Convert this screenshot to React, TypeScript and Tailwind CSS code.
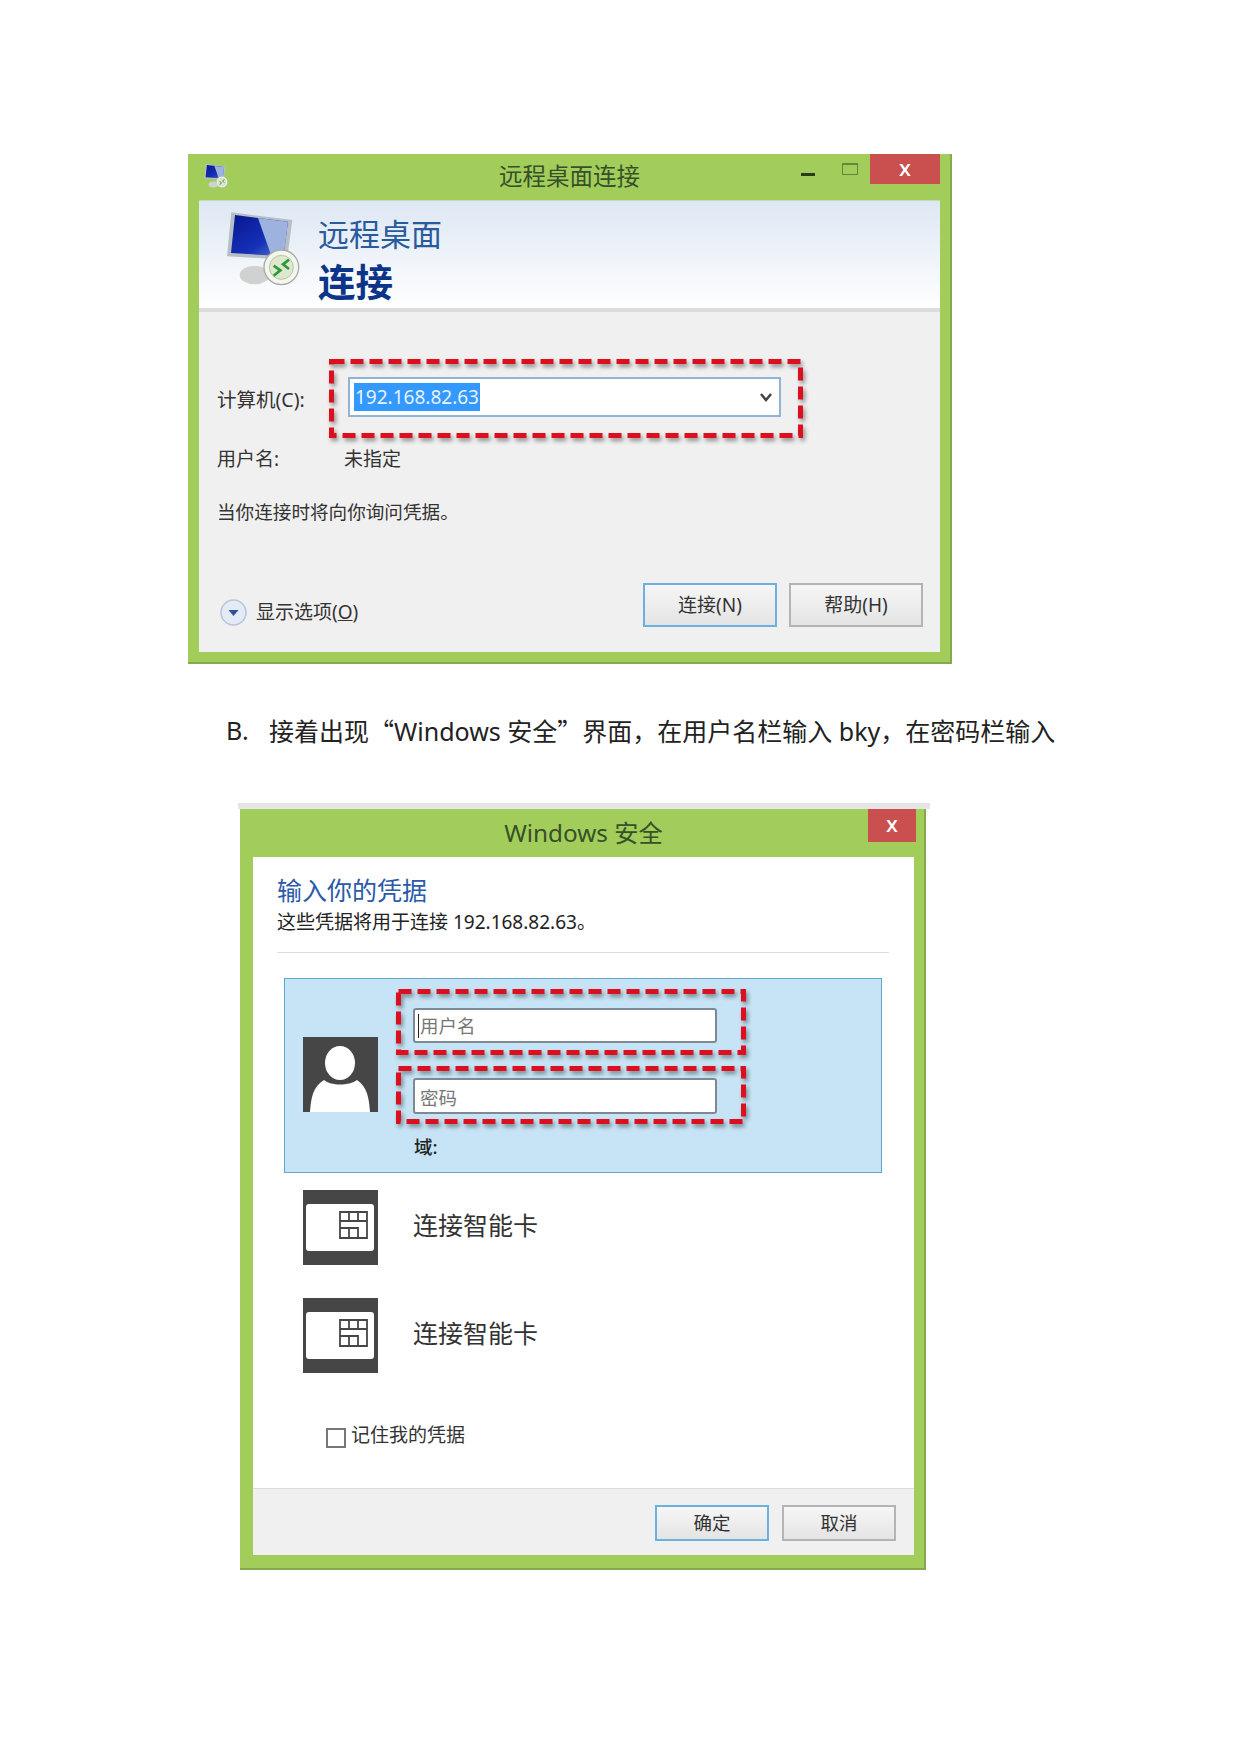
const MonitorIcon = ({ size }: { size: number }) => (
  <svg width={size} height={size} viewBox="100 180 240 240" className="shrink-0">
    <defs>
      <linearGradient id="screen" x1="0" y1="0" x2="1" y2="1">
        <stop offset="0" stopColor="#08168f" />
        <stop offset="0.6" stopColor="#1431b8" />
        <stop offset="1" stopColor="#5f7cc4" />
      </linearGradient>
    </defs>
    <ellipse cx="195" cy="378" rx="45" ry="28" fill="#d0d2d2" />
    <path d="M125 190L308 213L292 332L112 322Z" fill="#b8bec6" />
    <path d="M136 198L295 218L282 322L124 312Z" fill="url(#screen)" />
    <path d="M205 207L295 218L282 322L245 320Z" fill="#9db2de" />
    <circle cx="275" cy="355" r="52" fill="#f4f5ef" stroke="#a8aba4" strokeWidth="4" />
    <circle cx="275" cy="355" r="36" fill="#dfe8cf" stroke="#b5c89c" strokeWidth="3" />
    <path d="M252 350L272 364L252 380M298 332L280 346L298 360" fill="none" stroke="#2a9a3a" strokeWidth="8" />
  </svg>
);

const SmartCardIcon = () => (
  <svg width="75" height="75" viewBox="0 0 75 75" className="shrink-0">
    <rect width="75" height="75" fill="#464646" />
    <rect x="3" y="14" width="68" height="47" rx="3" fill="#ffffff" />
    <path d="M37 22H64V48H37ZM37 31H64M37 38H55V48M46 22V31M55 22V31M46 38V48" fill="none" stroke="#464646" strokeWidth="1.8" />
  </svg>
);

const PersonIcon = () => (
  <svg width="75" height="75" viewBox="0 0 75 75" className="shrink-0">
    <rect width="75" height="75" fill="#464646" />
    <ellipse cx="37" cy="26" rx="15" ry="17" fill="#ffffff" />
    <path d="M7 75C8 60 10 50 21 43C28 49 46 49 54 43C64 50 66 60 67 75Z" fill="#ffffff" />
  </svg>
);

// red annotation frame drawn over the dialog fields
const RedFrame = ({ w, h, className }: { w: number; h: number; className: string }) => (
  <svg width={w} height={h} className={`absolute drop-shadow-[2px_3px_2px_rgba(0,0,0,0.4)] ${className}`}>
    <rect x="2.5" y="2.5" width={w - 5} height={h - 5} fill="none" stroke="#dc0f1e" strokeWidth="5" strokeDasharray="13 6" />
  </svg>
);

const Btn = ({ label, primary, w, h, size }: { label: string; primary?: boolean; w: string; h: string; size: string }) => (
  <div className={`flex items-center justify-center bg-gradient-to-b from-[#f6f6f6] to-[#e4e4e4] text-[#333333] ${w} ${h} ${size} ${primary ? 'border-2 border-[#6cb0dc]' : 'border-2 border-[#b4b4b4]'}`}>
    {label}
  </div>
);

export default function App() {
  return (
    <div className="w-[1240px] h-[1753px] overflow-hidden bg-white pt-[154px] font-['Noto_Sans','Noto_Sans_CJK_SC',sans-serif] text-[#333333]">
      {/* remote desktop dialog */}
      <div className="ml-[188px] w-[764px] h-[510px] flex flex-col bg-[#a2cd5a] pl-[11px] pr-[12px] pb-[12px] shadow-[inset_-2px_-2px_0_#86a84e]">
        <div className="h-[46px] shrink-0 grid grid-cols-[1fr_auto_1fr]">
          <div className="pl-[4px] pt-[9px]">
            <MonitorIcon size={26} />
          </div>
          <div className="text-[23.5px] leading-[44px] text-[#36502a]">远程桌面连接</div>
          <div className="flex justify-end items-start">
            <div className="w-[14px] h-[3px] bg-[#2c3a20] mt-[19px]"></div>
            <div className="w-[16px] h-[12px] border border-[#5d8a3e] border-t-2 ml-[27px] mt-[9px]"></div>
            <div className="w-[70px] h-[30px] bg-[#c9504f] ml-[12px] text-center text-white font-medium text-[22px] leading-[27px]">x</div>
          </div>
        </div>

        <div className="flex-1 flex flex-col bg-[#f0f0f0] border-t border-[#c8d8b0]">
          <div className="h-[107px] shrink-0 flex bg-gradient-to-b from-[#dde7f3] to-white pl-[24px] pt-[8px] gap-[15px]">
            <MonitorIcon size={80} />
            <div className="flex flex-col pt-[2px]">
              <div className="text-[31px] leading-[46px] text-[#2a5a9e]">远程桌面</div>
              <div className="mt-[3px] text-[37.5px] leading-[44px] font-bold text-[#0c3489]">连接</div>
            </div>
          </div>
          <div className="h-[4px] shrink-0 bg-[#dcdcdc]"></div>

          <div className="relative mt-[65px] pl-[18px] flex items-center">
            <div className="w-[131px] text-[19.5px] pt-[6px]">计算机(C):</div>
            <div className="w-[433px] h-[40px] flex items-center justify-between bg-white border-2 border-[#8fb4d6] pl-[4px] pr-[6px]">
              <span className="bg-[#3399ff] text-[#e8f2ff] text-[19px] leading-[28px] px-[1px]">192.168.82.63</span>
              <svg width="14" height="14" viewBox="0 0 14 14">
                <path d="M2 4L7 10L12 4" fill="none" stroke="#444444" strokeWidth="2.5" />
              </svg>
            </div>
            <RedFrame w={474} h={79} className="left-[130px] top-[-18px]" />
          </div>

          <div className="mt-[30px] pl-[18px] flex items-center text-[19px] leading-[24px]">
            <div className="w-[127px]">用户名:</div>
            <div>未指定</div>
          </div>
          <div className="mt-[29px] pl-[18px] text-[18.6px] leading-[24px]">当你连接时将向你询问凭据。</div>

          <div className="mt-[59px] pl-[21px] pr-[17px] flex justify-between items-start">
            <div className="flex items-center gap-[9px] mt-[14px]">
              <svg width="27" height="27" viewBox="0 0 27 27">
                <circle cx="13.5" cy="13.5" r="12.5" fill="#e4ebf6" stroke="#b8c4d8" strokeWidth="1.5" />
                <path d="M8.5 11H18.5L13.5 17Z" fill="#2f4f9f" />
              </svg>
              <div className="text-[19px] leading-[30px]">显示选项(<span className="underline">O</span>)</div>
            </div>
            <div className="flex gap-[12px]">
              <Btn label="连接(N)" primary w="w-[134px]" h="h-[44px]" size="text-[19px]" />
              <Btn label="帮助(H)" w="w-[134px]" h="h-[44px]" size="text-[19px]" />
            </div>
          </div>
        </div>
      </div>

      <div className="mt-[49px] ml-[226px] h-[36px] flex items-center whitespace-nowrap text-[25px] text-[#222222]">
        <span className="w-[43px]">B.</span>
        <span>接着出现<span className="font-['Noto_Sans_CJK_SC',sans-serif]">“</span>Windows 安全<span className="font-['Noto_Sans_CJK_SC',sans-serif]">”</span>界面，在用户名栏输入 bky，在密码栏输入</span>
      </div>

      {/* windows security dialog */}
      <div className="mt-[54px] ml-[238px] w-[692px] border-t-[6px] border-[#e6e6e6]">
        <div className="ml-[2px] w-[686px] h-[761px] flex flex-col bg-[#a2cd5a] pl-[13px] pr-[12px] pb-[15px] shadow-[inset_-2px_-2px_0_#86a84e]">
          <div className="h-[48px] shrink-0 grid grid-cols-[1fr_auto_1fr]">
            <div></div>
            <div className="text-[24.3px] leading-[48px] text-[#36502a]">Windows 安全</div>
            <div className="flex justify-end items-start">
              <div className="w-[48px] h-[33px] mr-[-2px] bg-[#c9504f] text-center text-white font-medium text-[22px] leading-[29px]">x</div>
            </div>
          </div>

          <div className="flex-1 flex flex-col bg-white">
            <div className="ml-[24px] mt-[15px] text-[25px] leading-[36px] text-[#2a5aa8]">输入你的凭据</div>
            <div className="ml-[24px] mt-[1px] text-[19px] leading-[26px] text-[#222222]">这些凭据将用于连接 192.168.82.63。</div>
            <div className="ml-[24px] mt-[17px] w-[612px] h-[1px] bg-[#dddddd]"></div>

            <div className="relative ml-[31px] mt-[25px] w-[598px] h-[195px] flex bg-[#c6e4f5] border border-[#5fa9cf] pl-[18px] gap-[35px]">
              <div className="mt-[58px]">
                <PersonIcon />
              </div>
              <div className="flex flex-col pt-[29px]">
                <div className="w-[304px] h-[35px] flex items-center bg-white border-2 border-[#7d8a94] rounded-[3px] pl-[3px] text-[18.5px] text-[#777777]">
                  <span className="w-[1px] h-[24px] bg-[#222222] mr-[1px]"></span>用户名
                </div>
                <div className="w-[304px] h-[36px] mt-[35px] flex items-center bg-white border-2 border-[#7d8a94] rounded-[3px] pl-[5px] pt-[3px] text-[18.5px] text-[#777777]">
                  密码
                </div>
                <div className="mt-[21px] ml-[1px] text-[18.5px] leading-[24px] font-medium text-[#222222]">域:</div>
              </div>
              <RedFrame w={350} h={66} className="left-[111px] top-[10px]" />
              <RedFrame w={350} h={58} className="left-[111px] top-[87px]" />
            </div>

            <div className="ml-[50px] mt-[17px] flex items-center gap-[35px] text-[25px]">
              <SmartCardIcon />
              <span className="pb-[4px]">连接智能卡</span>
            </div>
            <div className="ml-[50px] mt-[33px] flex items-center gap-[35px] text-[25px]">
              <SmartCardIcon />
              <span className="pb-[4px]">连接智能卡</span>
            </div>

            <div className="ml-[73px] mt-[54px] flex items-start gap-[5px] text-[19px] leading-[16px]">
              <div className="w-[20px] h-[20px] border-2 border-[#777777] mt-[1px] bg-white"></div>
              <span>记住我的凭据</span>
            </div>

            <div className="mt-auto h-[67px] flex justify-end gap-[13px] bg-[#f0f0f0] border-t border-[#dddddd] pt-[16px] pr-[18px]">
              <Btn label="确定" primary w="w-[114px]" h="h-[36px]" size="text-[18.5px]" />
              <Btn label="取消" w="w-[114px]" h="h-[36px]" size="text-[18.5px]" />
            </div>
          </div>
        </div>
      </div>
    </div>
  );
}
